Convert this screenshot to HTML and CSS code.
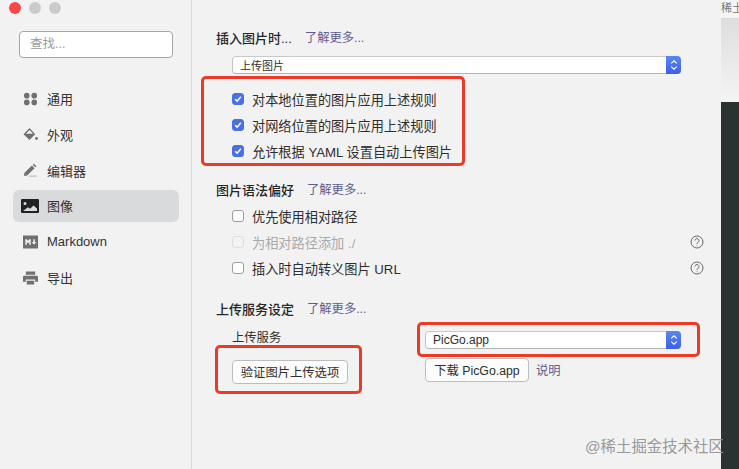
FILE: index.html
```html
<!DOCTYPE html>
<html lang="zh-CN">
<head>
    <meta charset="UTF-8">
    <title>偏好设置</title>
    <link rel="stylesheet" href="styles.css">
</head>
<body>
    <div class="desktop">
        <div class="window">
            <aside class="sidebar">
                <div class="traffic">
                    <span class="dot dot-red"></span>
                    <span class="dot"></span>
                    <span class="dot"></span>
                </div>
                <div class="search">查找...</div>
                <nav class="nav">
                    <div class="nav-item">
                        <svg class="nav-icon" viewBox="0 0 16 14"><circle cx="4" cy="3.4" r="3"/><circle cx="12" cy="3.4" r="3"/><circle cx="4" cy="10.6" r="3"/><circle cx="12" cy="10.6" r="3"/></svg>
                        <span>通用</span>
                    </div>
                    <div class="nav-item">
                        <svg class="nav-icon" viewBox="0 0 16 14"><path d="M7 0.5 0.5 7.2 7 13.5l6-6.3z M7 2.6 10.8 6.6H3.2z" fill-rule="evenodd"/><circle cx="14.4" cy="11.8" r="1.5"/></svg>
                        <span>外观</span>
                    </div>
                    <div class="nav-item">
                        <svg class="nav-icon" viewBox="0 0 16 14"><path d="M1 13.5 1.6 10 9.5 2.2 12.3 5 4.4 12.9z M10.4 1.3 11.6 0.2 14.3 2.9 13.1 4.1z"/><path d="M6.5 13h8v1h-8z" opacity="0.5"/></svg>
                        <span>编辑器</span>
                    </div>
                    <div class="nav-item nav-active">
                        <svg class="nav-icon nav-icon-dark" viewBox="0 0 18 14"><path d="M1 0h16a1 1 0 0 1 1 1v12a1 1 0 0 1-1 1H1a1 1 0 0 1-1-1V1a1 1 0 0 1 1-1z M4 3a1.5 1.5 0 1 0 0 3 1.5 1.5 0 0 0 0-3z M2 12h14V9.5l-3.5-3-3.5 3.2-2-1.4z" fill-rule="evenodd"/></svg>
                        <span>图像</span>
                    </div>
                    <div class="nav-item">
                        <svg class="nav-icon" viewBox="0 0 16 14"><path d="M0 0h16v14H0z M2.5 4v6h1.6V6.8L5.4 8.6 6.7 6.8V10h1.6V4H6.6L5.4 5.8 4.2 4z M11 4v3H9.4l2.4 3 2.4-3h-1.6V4z" fill-rule="evenodd"/></svg>
                        <span>Markdown</span>
                    </div>
                    <div class="nav-item">
                        <svg class="nav-icon" viewBox="0 0 16 14"><path d="M3 0h10v3.5H3z M1.5 4.5h13A1.5 1.5 0 0 1 16 6v5h-3V8.5H3V11H0V6a1.5 1.5 0 0 1 1.5-1.5z M4 10h8v4H4z"/></svg>
                        <span>导出</span>
                    </div>
                </nav>
            </aside>

            <main class="content">
                <div class="heading first">
                    <b>插入图片时...</b>
                    <a class="more">了解更多...</a>
                </div>
                <div class="select select-wide">
                    <span class="select-text">上传图片</span>
                    <span class="stepper"><svg viewBox="0 0 8 12"><path d="M1.2 4.4 4 1.8l2.8 2.6M1.2 7.6 4 10.2l2.8-2.6"/></svg></span>
                </div>

                <div class="checks checks-top">
                    <label class="check-row"><span class="box on"><svg viewBox="0 0 12 12"><path d="M2.6 6.3 5 8.7l4.4-5.4"/></svg></span>对本地位置的图片应用上述规则</label>
                    <label class="check-row"><span class="box on"><svg viewBox="0 0 12 12"><path d="M2.6 6.3 5 8.7l4.4-5.4"/></svg></span>对网络位置的图片应用上述规则</label>
                    <label class="check-row"><span class="box on"><svg viewBox="0 0 12 12"><path d="M2.6 6.3 5 8.7l4.4-5.4"/></svg></span>允许根据 YAML 设置自动上传图片</label>
                </div>

                <div class="heading heading-syntax">
                    <b>图片语法偏好</b>
                    <a class="more">了解更多...</a>
                </div>
                <div class="checks">
                    <label class="check-row"><span class="box"></span>优先使用相对路径</label>
                    <label class="check-row disabled"><span class="box"></span>为相对路径添加 ./<span class="help"><svg viewBox="0 0 14 14"><circle cx="7" cy="7" r="6"/><path d="M5 5.5a2 2 0 1 1 3 1.8c-.7.4-1 .8-1 1.6"/><path d="M7 10.3v.6"/></svg></span></label>
                    <label class="check-row"><span class="box"></span>插入时自动转义图片 URL<span class="help"><svg viewBox="0 0 14 14"><circle cx="7" cy="7" r="6"/><path d="M5 5.5a2 2 0 1 1 3 1.8c-.7.4-1 .8-1 1.6"/><path d="M7 10.3v.6"/></svg></span></label>
                </div>

                <div class="heading">
                    <b>上传服务设定</b>
                    <a class="more">了解更多...</a>
                </div>
                <div class="upload">
                    <div class="upload-left">
                        <div class="upload-label">上传服务</div>
                        <button class="btn btn-verify">验证图片上传选项</button>
                    </div>
                    <div class="upload-right">
                        <div class="select">
                            <span class="select-text">PicGo.app</span>
                            <span class="stepper"><svg viewBox="0 0 8 12"><path d="M1.2 4.4 4 1.8l2.8 2.6M1.2 7.6 4 10.2l2.8-2.6"/></svg></span>
                        </div>
                        <div class="download-row">
                            <button class="btn">下载 PicGo.app</button>
                            <a class="more">说明</a>
                        </div>
                    </div>
                </div>

                <!-- red annotations drawn on top of the screenshot -->
                <div class="mark mark-checks"></div>
                <div class="mark mark-verify"></div>
                <div class="mark mark-select"></div>
                <div class="watermark">@稀土掘金技术社区</div>
            </main>
        </div>
        <div class="behind">
            <div class="behind-top">稀土</div>
            <div class="behind-fade"></div>
            <div class="behind-dark"></div>
        </div>
    </div>
</body>
</html>
```

FILE: styles.css
```css
* {
    box-sizing: border-box;
}
html, body {
    margin: 0;
    height: 100%;
    overflow: hidden;
}
body {
    font-family: "Liberation Sans", "Noto Sans CJK SC", sans-serif;
    font-size: 13.2px;
    color: #2e2e2e;
    background: #f2f2f3;
}
.desktop {
    display: flex;
    width: 739px;
    height: 469px;
}
.window {
    display: flex;
    flex-shrink: 0;
    width: 720px;
    height: 469px;
    margin-left: 1px;
    background: #f2f2f3;
}
.behind {
    flex: 1;
    min-width: 0;
    display: flex;
    flex-direction: column;
}
.behind-top {
    height: 19px;
    font-size: 11px;
    line-height: 17px;
    color: #777;
    background: #f6f6f6;
    border-bottom: 1px solid #d8d8d8;
    white-space: nowrap;
    overflow: hidden;
}
.behind-fade {
    height: 83px;
    background: linear-gradient(#dedede, #f4f4f4);
}
.behind-dark {
    flex: 1;
    background: #2b3332;
}

/* sidebar */
.sidebar {
    width: 191px;
    flex-shrink: 0;
    border-right: 1px solid #dcdcdc;
    padding: 2px 0 0 0;
}
.traffic {
    display: flex;
    gap: 8px;
    padding-left: 8px;
}
.dot {
    width: 12px;
    height: 12px;
    border-radius: 50%;
    background: #cbcbcb;
}
.dot-red {
    background: #f9484a;
}
.search {
    width: 154px;
    height: 27px;
    margin: 17px 0 0 18px;
    padding-left: 10px;
    font-size: 12.5px;
    line-height: 25px;
    color: #9a9a9a;
    background: #fff;
    border: 1px solid #a6a6a6;
    border-radius: 4px;
}
.nav {
    margin-top: 24.6px;
}
.nav-item {
    display: flex;
    align-items: center;
    width: 166px;
    height: 32px;
    margin: 0 0 3.8px 12px;
    padding-left: 10px;
    border-radius: 6px;
    font-size: 13px;
    color: #333;
}
.nav-item span {
    margin-left: 9px;
}
.nav-active {
    background: #d8dadc;
}
.nav-icon {
    width: 15px;
    height: 14px;
    fill: #707070;
    flex-shrink: 0;
}
.nav-icon-dark {
    width: 18px;
    margin-left: -2px;
    margin-right: -1px;
    fill: #222;
}

/* main column */
.content {
    position: relative;
    flex: 1;
    padding: 27px 0 0 24px;
}
.heading {
    display: flex;
    align-items: center;
    gap: 13px;
    height: 20px;
    margin-top: 17px;
}
.heading.first {
    margin-top: 0;
}
.heading-syntax {
    margin-top: 15px;
}
.heading b {
    font-size: 13px;
    font-weight: 500;
    color: #262626;
}
.more {
    color: #5c5c8f;
    font-size: 12.3px;
}
.select {
    display: flex;
    align-items: center;
    height: 18px;
    background: #fff;
    border-top: 1px solid #c9c9c9;
    border-bottom: 1px solid #b4b4b4;
    border-left: 1px solid #c4c4c4;
    border-radius: 4px;
    font-size: 12px;
}
.select-wide {
    width: 449px;
    margin: 9px 0 0 16px;
    font-size: 11px;
}
.select-text {
    flex: 1;
    padding-left: 7px;
}
.stepper {
    display: flex;
    align-items: center;
    justify-content: center;
    width: 15px;
    height: 18px;
    background: linear-gradient(#5c87f0, #3a60ea);
    border-radius: 0 4px 4px 0;
}
.stepper svg {
    width: 8px;
    height: 12px;
    fill: none;
    stroke: #fff;
    stroke-width: 1.2;
}

/* checkbox rows */
.checks {
    padding-left: 16px;
    margin-top: 4px;
}
.checks-top {
    margin-top: 12px;
}
.check-row {
    display: flex;
    align-items: center;
    height: 26px;
    width: 472px;
    color: #2e2e2e;
}
.box {
    display: flex;
    align-items: center;
    justify-content: center;
    width: 12px;
    height: 12px;
    margin-right: 8px;
    background: #fff;
    border: 1px solid #9c9c9c;
    border-radius: 3px;
    flex-shrink: 0;
}
.box.on {
    background: #4a70e4;
    border-color: #4a70e4;
}
.box svg {
    width: 10px;
    height: 10px;
    fill: none;
    stroke: #fff;
    stroke-width: 1.8;
}
.disabled {
    color: #a9a9a9;
}
.disabled .box {
    background: #f3f3f3;
    border-color: #dedede;
}
.help {
    margin-left: auto;
    width: 14px;
    height: 14px;
    display: flex;
}
.help svg {
    width: 14px;
    height: 14px;
    fill: none;
    stroke: #666;
    stroke-width: 1;
}

/* upload settings */
.upload {
    display: flex;
    margin-top: 13px;
    padding-left: 16px;
}
.upload-left {
    width: 193px;
}
.upload-label {
    height: 29px;
    font-size: 12.3px;
    line-height: 15px;
}
.upload-right {
    width: 256px;
}
.upload-right .select {
    width: 256px;
}
.btn {
    height: 24px;
    padding: 0 8px;
    font-family: inherit;
    font-size: 12.3px;
    color: #2e2e2e;
    background: #fcfcfc;
    border: 1px solid #bdbdbd;
    border-radius: 4px;
}
.btn-verify {
    width: 116px;
    padding: 0;
}
.download-row {
    display: flex;
    align-items: center;
    gap: 7px;
    margin-top: 9px;
}
.download-row .btn {
    width: 104px;
    padding: 0;
}

/* annotations */
.mark {
    position: absolute;
    border: 3px solid #ec3a26;
    border-radius: 5px;
}
.mark-checks {
    left: 9px;
    top: 76px;
    width: 264px;
    height: 90px;
}
.mark-verify {
    left: 23px;
    top: 345px;
    width: 147px;
    height: 49px;
}
.mark-select {
    left: 225px;
    top: 322px;
    width: 283px;
    height: 35px;
}
.watermark {
    position: absolute;
    left: 393px;
    top: 437px;
    font-size: 15.4px;
    line-height: 20px;
    color: #999;
    white-space: nowrap;
}
```
